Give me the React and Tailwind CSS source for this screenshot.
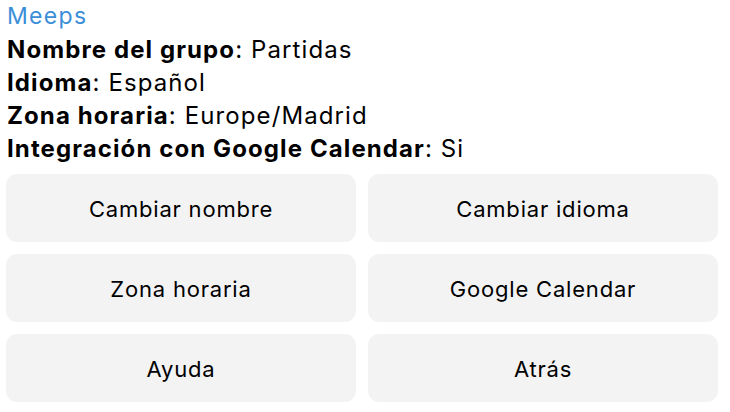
const INFO = [
  { label: "Nombre del grupo", value: "Partidas" },
  { label: "Idioma", value: "Español" },
  { label: "Zona horaria", value: "Europe/Madrid" },
  { label: "Integración con Google Calendar", value: "Si" },
];

const BUTTONS = [
  "Cambiar nombre",
  "Cambiar idioma",
  "Zona horaria",
  "Google Calendar",
  "Ayuda",
  "Atrás",
];

export default function App() {
  return (
    <div
      className="w-[730px] h-[412px] bg-white text-black overflow-hidden"
      style={{ fontFamily: "Inter, 'Noto Sans', sans-serif" }}
    >
      <div className="px-[7px] text-[24px] leading-[33px] tracking-[1.1px]">
        <div className="text-[#3b8ed8] tracking-[1.3px] text-[23px]">Meeps</div>
        {INFO.map((row) => (
          <div key={row.label}>
            <span className="font-bold">{row.label}</span>: {row.value}
          </div>
        ))}
      </div>
      <div className="grid grid-cols-2 gap-3 pl-[6px] pr-[12px] mt-[9px]">
        {BUTTONS.map((text) => (
          <button
            key={text}
            className="h-[68px] rounded-[11px] bg-[#f3f3f3] text-[22px] tracking-[0.8px] text-black flex items-center justify-center pt-[3px]"
          >
            {text}
          </button>
        ))}
      </div>
    </div>
  );
}
